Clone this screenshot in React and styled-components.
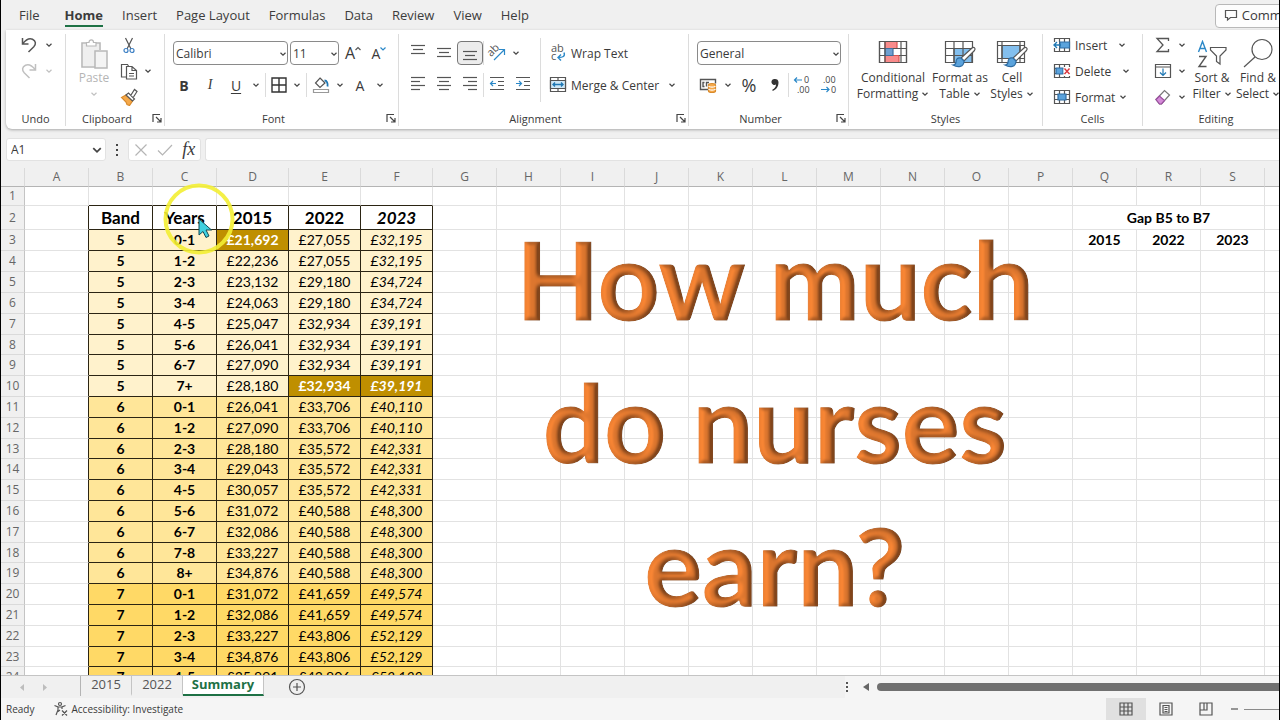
import React from 'react';
import styled, { createGlobalStyle, css } from 'styled-components';

const GlobalStyle = createGlobalStyle`
    *, *::before, *::after{
        box-sizing: border-box;
    }

    body{
        margin: 0;
        background-color: #f0f0f0;
    }

    button, input, select{
        font-family: inherit;
        font-size: inherit;
        color: inherit;
        margin: 0;
    }
`

const Window = styled.div`
    height: 100vh;
    display: flex;
    flex-direction: column;
    overflow: hidden;
    border-left: 1px solid #000;
    border-right: 1px solid #000;
    background-color: #f0f0f0;
    color: #3a3a3a;
    font-family: 'Open Sans', 'Noto Sans', sans-serif;
    font-size: 12px;
`

/* ---- menu ---- */

const MenuBar = styled.nav`
    flex: none;
    height: 30px;
    padding: 2px 0 0 18px;
    display: flex;
    align-items: center;
    gap: 19px;
    font-size: 13px;
`
const MenuItem = styled.a`
    display: block;
    flex: none;
    line-height: 20px;
    color: #3c3c3c;
    text-decoration: none;
    border-bottom: 2px solid ${p => p.$active ? '#1e7145' : 'transparent'};
    font-weight: ${p => p.$active ? 700 : 400};

    &:first-child{
        margin-right: 6px;
    }
`
const CommentsButton = styled.button`
    flex: none;
    display: flex;
    align-items: center;
    gap: 4px;
    height: 24px;
    margin-left: auto;
    margin-right: -38px;
    padding: 0 8px 2px;
    background-color: #fdfdfd;
    border: 1px solid #b8b8b8;
    border-radius: 4px;
`

/* ---- ribbon ---- */

const Ribbon = styled.section`
    flex: none;
    height: 99px;
    margin-left: 5px;
    padding-top: 2px;
    display: flex;
    background-color: #fff;
    border-radius: 0 0 0 6px;
    box-shadow: 0 1px 3px rgba(0, 0, 0, 0.3);
`
const Group = styled.div`
    flex: none;
    width: ${p => p.$width}px;
    display: flex;
    flex-direction: column;
    border-right: 1px solid #dcdcdc;
    margin: 2px 0 3px;
`
const GroupBody = styled.div`
    height: 77px;
    display: flex;
    padding-left: ${p => p.$pad || 6}px;
`
const GroupFooter = styled.div`
    display: flex;
    align-items: center;
    height: 16px;
    font-size: 11px;
`
const GroupLabel = styled.span`
    flex: 1;
    text-align: center;
`
const Stack = styled.div`
    display: flex;
    flex-direction: column;
    padding-top: ${p => p.$two ? 3 : 0}px;
`
const Row = styled.div`
    display: flex;
    align-items: center;
    height: ${p => p.$short ? 26 : 32}px;
    gap: ${p => p.$gap || 0}px;
    margin-top: ${p => p.$first ? -2 : 0}px;
`
const Tool = styled.button`
    flex: none;
    width: ${p => p.$width || 26}px;
    height: 24px;
    padding: 0;
    display: flex;
    align-items: center;
    justify-content: center;
    background: none;
    border: 1px solid transparent;
    border-radius: 4px;
    font-size: ${p => p.$size || 14}px;
    color: #3a3a3a;

    ${p => p.$pressed && css`
        background-color: #ececec;
        border-color: #777;
    `}
`
const Letter = styled.span`
    font-weight: ${p => p.$bold ? 700 : 400};
    font-style: ${p => p.$italic ? 'italic' : 'normal'};
    font-family: ${p => p.$italic ? "'Liberation Serif', serif" : 'inherit'};
    text-decoration: ${p => p.$underline ? 'underline' : 'none'};
    text-underline-offset: 2px;
`
const LabelTool = styled.button`
    flex: none;
    display: flex;
    align-items: center;
    gap: 4px;
    height: 24px;
    padding: 0;
    background: none;
    border: none;
    white-space: nowrap;
`
const Gap = styled.span`
    width: ${p => p.$width}px;
`
const Separator = styled.span`
    flex: none;
    width: 1px;
    height: 24px;
    margin: 0 ${p => p.$space || 0}px;
    background-color: #dcdcdc;
`
const TallSeparator = styled.span`
    width: 1px;
    height: 64px;
    margin: 4px 8px 0 4px;
    background-color: #dcdcdc;
`
const BigTool = styled.button`
    flex: none;
    width: ${p => p.$width}px;
    padding: 4px 0 0;
    display: flex;
    flex-direction: column;
    align-items: center;
    background: none;
    border: none;
    line-height: 16px;
    white-space: nowrap;
    color: ${p => p.$off ? '#b5b5b5' : '#3a3a3a'};
`
const IconSlot = styled.span`
    display: flex;
    height: 32px;
    padding-top: ${p => p.$tall ? 0 : 2}px;
`
const BigLine = styled.span`
    display: flex;
    align-items: center;
    gap: 3px;
    height: 16px;
`
const SelectBox = styled.div`
    flex: none;
    position: relative;
    display: flex;
    width: ${p => p.$width}px;

    select{
        appearance: none;
        width: 100%;
        height: 24px;
        padding: 0 2px;
        background-color: #fff;
        border: 1px solid #8a8a8a;
        border-radius: 4px;
    }

    svg{
        position: absolute;
        right: 1px;
        top: 9px;
        pointer-events: none;
    }
`

/* ---- formula bar ---- */

const FormulaBar = styled.div`
    flex: none;
    display: flex;
    align-items: center;
    height: 39px;
    padding: 2px 0 0 5px;
`
const NameBox = styled.div`
    display: flex;
    align-items: center;
    width: 100px;
    height: 23px;
    padding-right: 2px;
    background-color: #fff;
    border: 1px solid #e2e2e2;
    border-radius: 3px;

    input{
        flex: 1;
        min-width: 0;
        padding: 0 4px;
        border: none;
        outline: none;
        background: none;
    }
`
const FxBox = styled.div`
    display: flex;
    align-items: center;
    justify-content: space-around;
    width: 73px;
    height: 23px;
    margin-right: 4px;
    background-color: #fff;
    border: 1px solid #e2e2e2;
    border-radius: 3px;
`
const FxLetters = styled.span`
    font-family: 'Liberation Serif', serif;
    font-style: italic;
    font-size: 18px;
`
const FormulaInput = styled.input`
    flex: 1;
    min-width: 0;
    height: 23px;
    border: 1px solid #e2e2e2;
    border-right: none;
    border-radius: 3px 0 0 3px;
    background-color: #fff;
    outline: none;
`

/* ---- sheet ---- */

const SheetArea = styled.main`
    flex: 1;
    min-height: 0;
    position: relative;
    overflow: hidden;
    background-color: #fff;
`
const Sheet = styled.table`
    table-layout: fixed;
    width: 0;
    border-collapse: separate;
    border-spacing: 0;
    font-family: Lato, 'Open Sans', sans-serif;
    font-size: 14px;
    line-height: 16px;
    color: #000;

    th, td{
        padding: 0;
        overflow: hidden;
        white-space: nowrap;
        text-align: center;
    }

    tbody tr{
        height: 21px;
    }

    tbody tr:nth-child(1){
        height: 19px;
    }

    tbody tr:nth-child(2){
        height: 24px;
    }

    tbody tr:nth-child(5n + 8){
        height: 20px;
    }
`
const ColHead = styled.th`
    height: 19px;
    background-color: #f0f0f0;
    border-right: 1px solid #dadada;
    border-bottom: 1px solid #b4b4b4;
    font-family: 'Open Sans', sans-serif;
    font-size: 12px;
    font-weight: 400;
    color: #666;
`
const RowHead = styled.th`
    background-color: #f0f0f0;
    border-right: 1px solid #c4c4c4;
    border-bottom: 1px solid #dadada;
    font-family: 'Open Sans', sans-serif;
    font-size: 12px;
    font-weight: 400;
    color: #666;
`
const Cell = styled.td`
    background-color: ${p => p.$fill || '#fff'};
    border-right: 1px solid ${p => p.$darkRight ? '#2b2413' : '#e2e2e2'};
    border-bottom: 1px solid ${p => p.$darkBottom ? '#2b2413' : '#e2e2e2'};
    font-weight: ${p => p.$bold ? 700 : 400};
    font-style: ${p => p.$italic ? 'italic' : 'normal'};
    font-size: ${p => p.$large ? 17 : 14}px;
    color: ${p => p.$light ? '#fff' : 'inherit'};
`
const WordArt = styled.div`
    position: absolute;
    left: 494px;
    top: 39px;
    width: 560px;
    text-align: center;
    font-family: Lato, sans-serif;
    font-weight: 700;
    font-size: 108px;
    line-height: 143px;
    color: #ed7d31;
    -webkit-text-stroke: 1px #ed7d31;
    filter: url(#bevel);
`
const Pointer = styled.svg`
    position: absolute;
    left: 160px;
    top: 13px;
`

/* ---- sheet tabs and status ---- */

const TabStrip = styled.div`
    flex: none;
    display: flex;
    height: 23px;
    border-top: 1px solid #c4c4c4;
`
const TabNav = styled.div`
    width: 80px;
    height: 20px;
    padding-left: 10px;
    display: flex;
    border-right: 1px solid #b4b4b4;
`
const SheetTab = styled.button`
    width: ${p => p.$active ? 81 : 51}px;
    height: 20px;
    padding: 0 0 2px;
    font-size: 13px;
    line-height: 16px;
    font-weight: ${p => p.$active ? 700 : 400};
    color: ${p => p.$active ? '#1e7145' : '#555'};
    background-color: ${p => p.$active ? '#fff' : 'transparent'};
    border: none;
    border-right: 1px solid #c4c4c4;
    border-bottom: 2px solid ${p => p.$active ? '#1e7145' : 'transparent'};
`
const AddSheet = styled.button`
    margin-left: 24px;
    padding: 2px 0 0;
    background: none;
    border: none;
    display: flex;
`
const ScrollArea = styled.div`
    display: flex;
    align-items: center;
    width: 434px;
    margin-left: auto;
    padding-bottom: 1px;
    gap: 6px;
    background-color: #f5f5f5;
`
const ScrollThumb = styled.div`
    flex: 1;
    height: 8px;
    border-radius: 4px 0 0 4px;
    background-color: #707070;
`
const StatusBar = styled.footer`
    flex: none;
    display: flex;
    align-items: center;
    height: 22px;
    padding-left: 5px;
    background-color: #f5f5f5;
    font-size: 10px;
`
const AccessButton = styled.button`
    display: flex;
    align-items: center;
    gap: 2px;
    margin-left: 19px;
    padding: 0;
    background: none;
    border: none;
`
const Views = styled.div`
    display: flex;
    align-items: center;
    margin-left: auto;
    height: 100%;
`
const ViewButton = styled.button`
    width: 40px;
    height: 100%;
    padding: 0;
    display: flex;
    align-items: center;
    justify-content: center;
    border: none;
    background-color: ${p => p.$active ? '#e0e0e0' : 'transparent'};
`
const Zoom = styled.input`
    appearance: none;
    width: 120px;
    height: 1px;
    margin-right: -85px !important;
    background-color: #8a8a8a;

    &::-webkit-slider-thumb{
        appearance: none;
        width: 4px;
        height: 12px;
        background-color: #666;
    }
`

/* ---- icons ---- */

const Icon = ({ w = 18, h = w, box, children, ...rest }) => (
    <svg width={w} height={h} viewBox={box || `0 0 ${w} ${h}`} fill="none" stroke="#555" strokeWidth="1.2" aria-hidden="true" {...rest}>
        {children}
    </svg>
)

const Caret = ({ color = '#444', w = 8 }) => (
    <Icon w={w} box="0 0 8 8" stroke={color}><path d="M1.5 2.8L4 5.2L6.5 2.8" /></Icon>
)

const Drop = ({ label, width = 14, color }) => (
    <Tool $width={width} aria-label={label}><Caret color={color} /></Tool>
)

const UndoIcon = ({ flip, color = '#555' }) => (
    <Icon w={18} stroke={color} strokeWidth="1.5">
        <g transform={flip ? 'translate(18 0) scale(-1 1)' : undefined}>
            <path d="M2.5 2v6h6M2.8 7.6C6 3.5 9.5 2 12.5 3.2c3.5 1.6 3.7 5 1.3 7.6L8.5 16" />
        </g>
    </Icon>
)

const PasteIcon = () => (
    <Icon w={30} h={32} stroke="#b8b8b8">
        <path d="M7 5H3v24h13M21 12V5h-4" fill="none" strokeWidth="1.6" />
        <path d="M4 6h16v7h-4v15H4z" fill="#efefef" stroke="none" />
        <path d="M7.5 8V4.5h2.5C10 1 14.5 1 14.5 4.5H17V8z" fill="#fff" />
        <path d="M16 13h12v17H16z" fill="#f4f4f4" strokeWidth="1.5" />
    </Icon>
)

const CutIcon = () => (
    <Icon w={14} h={17}>
        <path d="M3.5 1L9 12M10.5 1L5 12" />
        <circle cx="4" cy="13.5" r="2" stroke="#3b7fc4" />
        <circle cx="10" cy="13.5" r="2" stroke="#3b7fc4" />
    </Icon>
)

const CopyIcon = () => (
    <Icon w={18}>
        <path d="M6.5 15H1.5V2.5h6l1 1.5M6.5 4.5h5.500l4.500 4v8.500h-10zM12 4.500v4h4.500M9 11.500h5M9 14h5" />
    </Icon>
)

const PainterIcon = () => (
    <Icon w={18}>
        <path d="M1.5 9.5L6 7L12.500 13l-3 4.500L7 16.500 6 14z" fill="#f5a94a" stroke="#d98a2b" />
        <path d="M6 7L8.500 5l6 6-2 2z" fill="#fff" />
        <path d="M11 7L14.500 1.500l2.500 2L13.500 9" fill="#fff" />
    </Icon>
)

const Lines = ({ rows }) => (
    <Icon w={16} h={18}>
        {rows.map(([x1, x2, y]) => <path key={y} d={`M${x1} ${y + 0.5}H${x2}`} />)}
    </Icon>
)
const alignRows = {
    top: [[1, 15, 1], [3, 13, 5], [1, 15, 9]],
    middle: [[1, 15, 4], [3, 13, 8], [1, 15, 12]],
    bottom: [[1, 15, 7], [3, 13, 11], [1, 15, 15]],
    left: [[1, 15, 1], [1, 10, 5], [1, 15, 9], [1, 10, 13]],
    center: [[1, 15, 1], [3, 13, 5], [1, 15, 9], [3, 13, 13]],
    right: [[1, 15, 1], [6, 15, 5], [1, 15, 9], [6, 15, 13]],
}

const IndentIcon = ({ out }) => (
    <Icon w={16} h={18}>
        <path d="M1 1.5h14M9 5.5h6M9 9.5h6M1 13.5h14" />
        <path d={out ? 'M7 7.5H1.5M4 5L1.5 7.5L4 10' : 'M1 7.5h5.500M4 5l2.500 2.500L4 10'} stroke="#2b88c8" />
    </Icon>
)

const OrientationIcon = () => (
    <Icon w={20}>
        <text x="0" y="11" transform="rotate(-45 6 8)" fontSize="11" fill="#555" stroke="none">ab</text>
        <path d="M7 17L17 7M12 6.500H17.500V12" stroke="#2b88c8" />
    </Icon>
)

const WrapIcon = () => (
    <Icon w={18}>
        <text x="2" y="8" fontSize="11" fill="#555" stroke="none">ab</text>
        <text x="2" y="16" fontSize="11" fill="#555" stroke="none">c</text>
        <path d="M15 8.500c1.500 4-1.500 5-5.500 5M12 10.500l-3 3 3 3" stroke="#2b88c8" strokeWidth="1.4" />
    </Icon>
)

const MergeIcon = () => (
    <Icon w={18}>
        <path d="M1.5 1.5h15v14h-15z" />
        <path d="M1.5 4.5h15v8h-15z" fill="#cfe8f7" />
        <path d="M9 1.5v3M9 12.5v3" />
        <path d="M4 8.5h10M6 6.500L4 8.500l2 2M12 6.500l2 2-2 2" stroke="#1f78b4" strokeWidth="1.4" />
    </Icon>
)

const BordersIcon = () => (
    <Icon w={16} stroke="#333"><path d="M1 1h14v14H1zM8 1v14M1 8h14" strokeWidth="1.4" /></Icon>
)

const FillIcon = () => (
    <Icon w={18}>
        <path d="M8 2l5 5-5 4.500L3.500 7z" />
        <path d="M12.500 4.500c2.500 0 3.500 3 3 6" stroke="#1f78b4" strokeWidth="1.8" />
        <path d="M1.500 13.500h15v3h-15z" stroke="#999" />
    </Icon>
)

const MoneyIcon = () => (
    <Icon w={18}>
        <path d="M9 13.500H1.500V3.500h15v4M5.500 6.500h-1.500v4h1.500M10 6.500h-2.500v4" strokeWidth="1.4" />
        <path d="M9.500 9c0-2 7-2 7 0v6c0 2-7 2-7 0z" fill="#f6a94a" stroke="#d98a2b" />
        <path d="M9.500 10c1 1.500 6 1.500 7 0M9.500 13c1 1.500 6 1.500 7 0" stroke="#fff" />
    </Icon>
)

const DecimalIcon = ({ less }) => (
    <Icon w={20} h={18}>
        <text x={less ? 4 : 11} y="7" fontSize="9" fill="#444" stroke="none">{less ? '.00' : '0'}</text>
        <text x={less ? 12 : 4} y="17" fontSize="9" fill="#444" stroke="none">{less ? '0' : '.00'}</text>
        <path d={less ? 'M2 13.5h8M7.5 11l2.500 2.500L7.500 16' : 'M9 4H1.500M4 1.500L1.500 4 4 6.500'} stroke="#2b88c8" />
    </Icon>
)

const CondIcon = () => (
    <Icon w={30} h={24}>
        <path d="M1.5 1.5h27v21h-27z" fill="#fff" />
        <path d="M7 1.5h12v7H7zM7 15.5h14v7H7z" fill="#f98b8b" stroke="#d9534f" />
        <path d="M7 8.5h8v7H7z" fill="#6f9fd0" stroke="#3f6f9f" />
        <path d="M1.5 8.5H7M15 8.5h13.500M1.500 15.500H7M21 15.500h7.500M7 1.500v21M23 1.500v21M1.500 1.500h27v21h-27z" />
    </Icon>
)

const Brush = () => (
    <g>
        <path d="M29 8L18 18l3 3L31.500 10.500c1.500-2-.5-4-2.500-2.500z" fill="#fff" />
        <path d="M18 18c-4-1-5 2-5 4.500-.5 2-2 2.500-3 2.500 5 3 11 2 11-4z" fill="#5ba3dc" stroke="#2f6da3" />
    </g>
)

const FormatTableIcon = () => (
    <Icon w={34} h={28}>
        <path d="M11 8.5h18v14H11z" fill="#83bfee" />
        <path d="M2.5 1.5h27v21h-27zM2.5 8.5h27M2.5 15.5h27M11 1.5v21M20 1.5v21" />
        <Brush />
    </Icon>
)

const CellStylesIcon = () => (
    <Icon w={34} h={28}>
        <path d="M7 5.5h18v13H7z" fill="#83bfee" />
        <path d="M2.5 1.5h27v21h-27zM2.5 5.5h27M2.5 18.5h27M7 1.5v21M25 1.5v21" />
        <Brush />
    </Icon>
)

const CellsIcon = ({ kind }) => (
    <Icon w={18} h={16}>
        <path d="M1.5 1.5h15v13h-15zM1.5 5.5h15M1.5 10.5h15M6.5 1.5v13M11.5 1.5v13" />
        {kind === 'insert' && <>
            <path d="M7 5h9.500v6H7z" fill="#5ba3dc" stroke="#2f6da3" />
            <path d="M0 5h6v6H0z" fill="#fff" stroke="none" />
            <path d="M8 8H1M4 5L1 8l3 3" stroke="#1f78b4" strokeWidth="1.4" />
        </>}
        {kind === 'delete' && <>
            <path d="M3 5h7v6H3z" fill="#5ba3dc" stroke="#2f6da3" />
            <path d="M10.500 4h8v9h-8z" fill="#fff" stroke="none" />
            <path d="M11.500 5.500l5 5.500M16.500 5.500l-5 5.500" stroke="#d9363e" strokeWidth="1.4" />
        </>}
        {kind === 'format' && <path d="M5 5h8v6H5z" fill="#5ba3dc" stroke="#2f6da3" />}
    </Icon>
)

const SigmaIcon = () => (
    <Icon w={16} strokeWidth="1.3"><path d="M13.5 4V1.5H2L8 8l-6 6.500h11.500V12" /></Icon>
)

const FillDownIcon = () => (
    <Icon w={18} h={16}>
        <path d="M1.5 1.5h15v13h-15zM1.5 4h15" />
        <path d="M9 5.5v7M6 9.5l3 3 3-3" stroke="#1f78b4" />
    </Icon>
)

const EraserIcon = () => (
    <Icon w={18}>
        <path d="M2 11.5L10.5 2.500l5 4.500L7.500 16H5.500z" fill="#fff" stroke="#777" />
        <path d="M2 11.500l3.500-3.500 5 4.500L7.500 16H5.500z" fill="#d58bd8" stroke="#9b4fa0" />
    </Icon>
)

const SortIcon = () => (
    <Icon w={30} h={28}>
        <path d="M1.5 12L5.5 1.5L9.5 12M3 8.5h5" stroke="#2b88c8" strokeWidth="1.4" />
        <path d="M2 16.5h7L2 26.5h7.500" strokeWidth="1.4" />
        <path d="M13.500 7.500h15.500v2.500l-6 6v8l-3.500-2.500V16l-6-6z" />
    </Icon>
)

const FindIcon = () => (
    <Icon w={32} h={30}><circle cx="20" cy="11.5" r="10" /><path d="M13 19L2 29" /></Icon>
)

const LaunchIcon = () => (
    <Icon w={10} stroke="#444"><path d="M1 9V1.500h7M4 4l5 5M9 5v4H5" /></Icon>
)

const Launcher = styled.button`
    width: 16px;
    height: 16px;
    padding: 3px 0 0 4px;
    display: flex;
    background: none;
    border: none;
`

const RibbonGroup = ({ name, width, pad, launcher, children }) => (
    <Group $width={width}>
        <GroupBody $pad={pad}>{children}</GroupBody>
        <GroupFooter>
            <GroupLabel>{name}</GroupLabel>
            {launcher && <Launcher aria-label={`${name} settings`}><LaunchIcon /></Launcher>}
        </GroupFooter>
    </Group>
)

const Picker = ({ label, value, width }) => (
    <SelectBox $width={width}>
        <select aria-label={label} defaultValue={value}><option>{value}</option></select>
        <Caret />
    </SelectBox>
)

/* ---- data ---- */

const menus = ['File', 'Home', 'Insert', 'Page Layout', 'Formulas', 'Data', 'Review', 'View', 'Help']
const columns = 'ABCDEFGHIJKLMNOPQRSTUVWXYZ'.split('')
const wide = ['D', 'E', 'F']

const pay = [
    ['5', '0-1', '£21,692', '£27,055', '£32,195'],
    ['5', '1-2', '£22,236', '£27,055', '£32,195'],
    ['5', '2-3', '£23,132', '£29,180', '£34,724'],
    ['5', '3-4', '£24,063', '£29,180', '£34,724'],
    ['5', '4-5', '£25,047', '£32,934', '£39,191'],
    ['5', '5-6', '£26,041', '£32,934', '£39,191'],
    ['5', '6-7', '£27,090', '£32,934', '£39,191'],
    ['5', '7+', '£28,180', '£32,934', '£39,191'],
    ['6', '0-1', '£26,041', '£33,706', '£40,110'],
    ['6', '1-2', '£27,090', '£33,706', '£40,110'],
    ['6', '2-3', '£28,180', '£35,572', '£42,331'],
    ['6', '3-4', '£29,043', '£35,572', '£42,331'],
    ['6', '4-5', '£30,057', '£35,572', '£42,331'],
    ['6', '5-6', '£31,072', '£40,588', '£48,300'],
    ['6', '6-7', '£32,086', '£40,588', '£48,300'],
    ['6', '7-8', '£33,227', '£40,588', '£48,300'],
    ['6', '8+', '£34,876', '£40,588', '£48,300'],
    ['7', '0-1', '£31,072', '£41,659', '£49,574'],
    ['7', '1-2', '£32,086', '£41,659', '£49,574'],
    ['7', '2-3', '£33,227', '£43,806', '£52,129'],
    ['7', '3-4', '£34,876', '£43,806', '£52,129'],
    ['7', '4-5', '£35,891', '£43,806', '£52,129'],
]
const heads = ['Band', 'Years', '2015', '2022', '2023']
const bandFill = { 5: '#fff2cc', 6: '#ffe699', 7: '#ffd966' }
const marked = ['D3', 'E10', 'F10']
const gap = { Q3: '2015', R3: '2022', S3: '2023' }

const SheetCell = ({ row, col }) => {
    const name = columns[col] + row
    const lastRow = pay.length + 2
    const inTable = col >= 1 && col <= 5 && row >= 2 && row <= lastRow
    const line = pay[row - 3]
    const mark = marked.includes(name)
    const props = {
        $darkRight: col <= 5 && row >= 2 && row <= lastRow,
        $darkBottom: col >= 1 && col <= 5 && row <= lastRow,
    }

    if (inTable) {
        return (
            <Cell {...props}
                $fill={mark ? '#bf8f00' : line && bandFill[line[0]]}
                $light={mark}
                $large={row === 2}
                $bold={row === 2 || col <= 2 || mark}
                $italic={col === 5}
            >
                {row === 2 ? heads[col - 1] : line[col - 1]}
            </Cell>
        )
    }
    return <Cell {...props} $bold>{gap[name]}</Cell>
}

const SheetRow = ({ row }) => (
    <tr>
        <RowHead scope="row">{row}</RowHead>
        {columns.map((c, i) => {
            if (row === 2 && c === 'Q') return <Cell key={c} colSpan={3} $bold>Gap B5 to B7</Cell>
            if (row === 2 && (c === 'R' || c === 'S')) return null
            return <SheetCell key={c} row={row} col={i} />
        })}
    </tr>
)

const App = () => {
  return <Window>
      <GlobalStyle />

      <MenuBar>
          {menus.map(m => <MenuItem key={m} href="#" $active={m === 'Home'}>{m}</MenuItem>)}
          <CommentsButton>
              <Icon w={14}><path d="M1.5 2.500h11v7H6.500L3.500 12V9.500h-2z" /></Icon>
              Comments
          </CommentsButton>
      </MenuBar>

      <Ribbon>
          <RibbonGroup name="Undo" width={60} pad={10}>
              <Stack>
                  <Row $short $first><Tool aria-label="Undo"><UndoIcon /></Tool><Drop label="Undo list" /></Row>
                  <Row $short><Tool aria-label="Redo"><UndoIcon flip color="#c0c0c0" /></Tool><Drop label="Redo list" color="#c0c0c0" /></Row>
              </Stack>
          </RibbonGroup>

          <RibbonGroup name="Clipboard" width={99} launcher>
              <BigTool $width={44} $off>
                  <IconSlot $tall><PasteIcon /></IconSlot>
                  <BigLine>Paste</BigLine>
                  <BigLine><Caret color="#c0c0c0" /></BigLine>
              </BigTool>
              <Stack>
                  <Row $short $first><Tool aria-label="Cut"><CutIcon /></Tool></Row>
                  <Row $short><Tool aria-label="Copy"><CopyIcon /></Tool><Drop label="Copy options" width={12} /></Row>
                  <Row $short><Tool aria-label="Format painter"><PainterIcon /></Tool></Row>
              </Stack>
          </RibbonGroup>

          <RibbonGroup name="Font" width={234} launcher>
              <Stack $two>
                  <Row $gap={2}>
                      <Gap />
                      <Picker label="Font" value="Calibri" width={115} />
                      <Picker label="Font size" value="11" width={49} />
                      <Tool $width={24} $size={16} aria-label="Grow font">A<Icon w={6} h={14}><path d="M.5 4L3 1.500L5.500 4" /></Icon></Tool>
                      <Tool $width={24} $size={14} aria-label="Shrink font">A<Icon w={6} h={14}><path d="M.5 1.500L3 4l2.500-2.500" stroke="#2b88c8" /></Icon></Tool>
                  </Row>
                  <Row>
                      <Tool><Letter $bold>B</Letter></Tool>
                      <Tool><Letter $italic>I</Letter></Tool>
                      <Tool><Letter $underline>U</Letter></Tool>
                      <Drop label="Underline style" />
                      <Separator $space={2} />
                      <Tool $width={22} aria-label="Borders"><BordersIcon /></Tool>
                      <Drop label="Border style" />
                      <Separator $space={2} />
                      <Tool $width={24} aria-label="Fill colour"><FillIcon /></Tool>
                      <Drop label="Fill colours" />
                      <Tool>A</Tool>
                      <Drop label="Font colours" />
                  </Row>
              </Stack>
          </RibbonGroup>

          <RibbonGroup name="Alignment" width={290} launcher>
              <Stack $two>
                  <Row>
                      <Tool aria-label="Top align"><Lines rows={alignRows.top} /></Tool>
                      <Tool aria-label="Middle align"><Lines rows={alignRows.middle} /></Tool>
                      <Tool $pressed aria-label="Bottom align"><Lines rows={alignRows.bottom} /></Tool>
                      <Separator />
                      <Tool aria-label="Orientation"><OrientationIcon /></Tool>
                      <Drop label="Orientation options" width={12} />
                  </Row>
                  <Row>
                      <Tool aria-label="Align left"><Lines rows={alignRows.left} /></Tool>
                      <Tool aria-label="Center"><Lines rows={alignRows.center} /></Tool>
                      <Tool aria-label="Align right"><Lines rows={alignRows.right} /></Tool>
                      <Separator />
                      <Tool aria-label="Decrease indent"><IndentIcon out /></Tool>
                      <Tool aria-label="Increase indent"><IndentIcon /></Tool>
                  </Row>
              </Stack>
              <TallSeparator />
              <Stack $two>
                  <Row><LabelTool><WrapIcon />Wrap Text</LabelTool></Row>
                  <Row><LabelTool><MergeIcon />Merge &amp; Center</LabelTool><Gap $width={6} /><Drop label="Merge options" /></Row>
              </Stack>
          </RibbonGroup>

          <RibbonGroup name="Number" width={160} launcher>
              <Stack $two>
                  <Row $gap={2}><Gap /><Picker label="Number format" value="General" width={144} /></Row>
                  <Row>
                      <Tool aria-label="Accounting format"><MoneyIcon /></Tool>
                      <Drop label="Currencies" />
                      <Tool $width={28} $size={18}>%</Tool>
                      <Tool $width={24} aria-label="Comma style">
                          <Icon w={10} h={16}><path d="M5 2a3 3 0 1 0 1 5.500c0 2.500-1.500 4-3.500 5v1.500C6 13 8.500 9.500 8.500 5.500 8.500 3 7 2 5 2z" fill="#333" stroke="none" /></Icon>
                      </Tool>
                      <Separator $space={1} />
                      <Tool aria-label="Increase decimal"><DecimalIcon /></Tool>
                      <Tool aria-label="Decrease decimal"><DecimalIcon less /></Tool>
                  </Row>
              </Stack>
          </RibbonGroup>

          <RibbonGroup name="Styles" width={194}>
              <BigTool $width={76}><IconSlot><CondIcon /></IconSlot><BigLine>Conditional</BigLine><BigLine>Formatting <Caret /></BigLine></BigTool>
              <BigTool $width={58}><IconSlot><FormatTableIcon /></IconSlot><BigLine>Format as</BigLine><BigLine>Table <Caret /></BigLine></BigTool>
              <BigTool $width={46}><IconSlot><CellStylesIcon /></IconSlot><BigLine>Cell</BigLine><BigLine>Styles <Caret /></BigLine></BigTool>
          </RibbonGroup>

          <RibbonGroup name="Cells" width={100} pad={10}>
              <Stack>
                  <Row $short $first><LabelTool><CellsIcon kind="insert" />Insert</LabelTool><Gap $width={8} /><Drop label="Insert options" /></Row>
                  <Row $short><LabelTool><CellsIcon kind="delete" />Delete</LabelTool><Gap $width={8} /><Drop label="Delete options" /></Row>
                  <Row $short><LabelTool><CellsIcon kind="format" />Format<Caret /></LabelTool></Row>
              </Stack>
          </RibbonGroup>

          <RibbonGroup name="Editing" width={147} pad={8}>
              <Stack>
                  <Row $short $first><Tool $width={24} aria-label="Sum"><SigmaIcon /></Tool><Drop label="Functions" /></Row>
                  <Row $short><Tool $width={24} aria-label="Fill"><FillDownIcon /></Tool><Drop label="Fill options" /></Row>
                  <Row $short><Tool $width={24} aria-label="Clear"><EraserIcon /></Tool><Drop label="Clear options" /></Row>
              </Stack>
              <BigTool $width={46}><IconSlot><SortIcon /></IconSlot><BigLine>Sort &amp;</BigLine><BigLine>Filter <Caret /></BigLine></BigTool>
              <BigTool $width={46}><IconSlot $tall><FindIcon /></IconSlot><BigLine>Find &amp;</BigLine><BigLine>Select <Caret /></BigLine></BigTool>
          </RibbonGroup>
      </Ribbon>

      <FormulaBar>
          <NameBox><input aria-label="Name box" defaultValue="A1" /><Caret w={12} /></NameBox>
          <Icon w={22} h={14} fill="#444" stroke="none"><path d="M10 1h2v2h-2zM10 6h2v2h-2zM10 11h2v2h-2z" /></Icon>
          <FxBox>
              <Icon w={14} stroke="#b5b5b5"><path d="M1.500 1.500l11 11M12.500 1.500l-11 11" /></Icon>
              <Icon w={16} h={14} stroke="#b5b5b5"><path d="M1 7.500L5.500 12L15 2" /></Icon>
              <FxLetters>fx</FxLetters>
          </FxBox>
          <FormulaInput aria-label="Formula" />
      </FormulaBar>

      <SheetArea>
          <Sheet>
              <colgroup>
                  <col width="24" />
                  {columns.map(c => <col key={c} width={wide.includes(c) ? 72 : 64} />)}
              </colgroup>
              <thead>
                  <tr>
                      <ColHead />
                      {columns.map(c => <ColHead key={c} scope="col">{c}</ColHead>)}
                  </tr>
              </thead>
              <tbody>
                  {Array.from({ length: pay.length + 2 }, (_, i) => <SheetRow key={i} row={i + 1} />)}
              </tbody>
          </Sheet>

          <svg width="0" height="0" aria-hidden="true" style={{ position: 'absolute' }}>
              <filter id="bevel" x="-2%" y="-2%" width="104%" height="104%" colorInterpolationFilters="sRGB">
                  <feGaussianBlur in="SourceAlpha" stdDeviation="2.5" result="soft" />
                  <feDiffuseLighting in="soft" surfaceScale="6" diffuseConstant="1" lightingColor="#f58634" result="lit">
                      <feDistantLight azimuth="185" elevation="50" />
                  </feDiffuseLighting>
                  <feComposite in="lit" in2="SourceGraphic" operator="arithmetic" k1="0" k2="0.48" k3="0.55" k4="0" result="mix" />
                  <feComposite in="mix" in2="SourceAlpha" operator="in" />
              </filter>
          </svg>
          <WordArt>How much<br />do nurses<br />earn?</WordArt>

          <Pointer width="80" height="80" viewBox="0 0 80 80" aria-hidden="true">
              <circle cx="38" cy="38" r="33.5" fill="none" stroke="#f3ee33" strokeOpacity=".9" strokeWidth="4" />
              <path d="M38 38v16l4-3.500 3 6 3-1.500-3-6h5.500z" fill="#3fd0e0" stroke="#134a55" strokeWidth="1" />
          </Pointer>
      </SheetArea>

      <TabStrip>
          <TabNav>
              <Icon w={22} fill="#bdbdbd" stroke="none"><path d="M13 8v7l-4-3.500z" /></Icon>
              <Icon w={22} fill="#bdbdbd" stroke="none"><path d="M10 8v7l4-3.500z" /></Icon>
          </TabNav>
          <SheetTab>2015</SheetTab>
          <SheetTab>2022</SheetTab>
          <SheetTab $active>Summary</SheetTab>
          <AddSheet aria-label="New sheet">
              <Icon w={18}><circle cx="9" cy="9" r="7.5" /><path d="M9 5v8M5 9h8" /></Icon>
          </AddSheet>
          <ScrollArea>
              <Icon w={4} h={12} fill="#555" stroke="none"><path d="M1 1h2v2H1zM1 5h2v2H1zM1 9h2v2H1z" /></Icon>
              <Gap />
              <Icon w={10} fill="#666" stroke="none"><path d="M8 1v8L2 5z" /></Icon>
              <ScrollThumb />
          </ScrollArea>
      </TabStrip>

      <StatusBar>
          Ready
          <AccessButton>
              <Icon w={16}>
                  <circle cx="7" cy="3" r="1.5" />
                  <path d="M1.500 4.500L5 6v3l-2 5M12.500 4.500L9 6v2M5 6h4M5 10.500l2-1.500M9 9.500l5 5M14 9.500l-5 5" />
              </Icon>
              Accessibility: Investigate
          </AccessButton>
          <Views>
              <ViewButton $active aria-label="Normal"><Icon w={14}><path d="M1 1h12v12H1zM5 1v12M9 1v12M1 5h12M1 9h12" /></Icon></ViewButton>
              <ViewButton aria-label="Page layout"><Icon w={14}><path d="M1 1h12v12H1zM4 3.500h6v7.500H4zM5.500 5.500h3M5.500 7.500h3M5.500 9.500h3" /></Icon></ViewButton>
              <ViewButton aria-label="Page break preview"><Icon w={14}><path d="M1 1h12v12H1zM1 8h7V1M5 1v7" /></Icon></ViewButton>
              <Icon w={18} h={10}><path d="M5 5h7" /></Icon>
              <Zoom type="range" aria-label="Zoom" />
          </Views>
      </StatusBar>
  </Window>;
};

export default App;
